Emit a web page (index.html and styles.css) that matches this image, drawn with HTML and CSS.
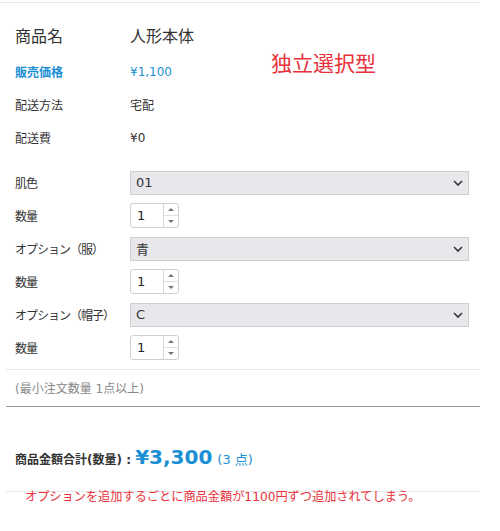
FILE: index.html
```html
<!DOCTYPE html>
<html lang="ja">
  <head>
    <meta charset="UTF-8" />
    <meta name="viewport" content="width=device-width, initial-scale=1.0" />
    <title>商品詳細</title>
    <link rel="stylesheet" href="styles.css">
  </head>
  <body>
    <div class="panel">
      <div class="info">
        <div class="row row-title">
          <span class="label">商品名</span>
          <span class="value">人形本体</span>
        </div>
        <div class="row row-price">
          <span class="label">販売価格</span>
          <span class="value">¥1,100</span>
        </div>
        <div class="row">
          <span class="label">配送方法</span>
          <span class="value">宅配</span>
        </div>
        <div class="row">
          <span class="label">配送費</span>
          <span class="value">¥0</span>
        </div>
      </div>

      <div class="options">
        <div class="row">
          <span class="label">肌色</span>
          <div class="select">
            <span>01</span>
            <svg class="chevron" width="10" height="6" viewBox="0 0 10 6"><path d="M1 1l4 4 4-4" fill="none" stroke="#333" stroke-width="1.6"/></svg>
          </div>
        </div>
        <div class="row">
          <span class="label">数量</span>
          <div class="qty">
            <span class="qty-value">1</span>
            <span class="spin"><i class="up"></i><i class="down"></i></span>
          </div>
        </div>
        <div class="row">
          <span class="label">オプション（服）</span>
          <div class="select">
            <span>青</span>
            <svg class="chevron" width="10" height="6" viewBox="0 0 10 6"><path d="M1 1l4 4 4-4" fill="none" stroke="#333" stroke-width="1.6"/></svg>
          </div>
        </div>
        <div class="row">
          <span class="label">数量</span>
          <div class="qty">
            <span class="qty-value">1</span>
            <span class="spin"><i class="up"></i><i class="down"></i></span>
          </div>
        </div>
        <div class="row">
          <span class="label">オプション（帽子）</span>
          <div class="select">
            <span>C</span>
            <svg class="chevron" width="10" height="6" viewBox="0 0 10 6"><path d="M1 1l4 4 4-4" fill="none" stroke="#333" stroke-width="1.6"/></svg>
          </div>
        </div>
        <div class="row">
          <span class="label">数量</span>
          <div class="qty">
            <span class="qty-value">1</span>
            <span class="spin"><i class="up"></i><i class="down"></i></span>
          </div>
        </div>
      </div>

      <p class="min-order">(最小注文数量 1点以上)</p>

      <div class="total">
        <span class="total-label">商品金額合計(数量) : </span>
        <span class="total-price">¥3,300</span>
        <span class="total-count">(3 点)</span>
      </div>

      <div class="note-type">独立選択型</div>
      <div class="note-bottom">オプションを追加するごとに商品金額が1100円ずつ追加されてしまう。</div>
    </div>
  </body>
</html>
```

FILE: styles.css
```css
body {
  margin: 0;
  padding: 0;
  background: #fff;
  font-family: "DejaVu Sans", "Noto Sans CJK JP", sans-serif;
  color: #333;
}

.panel {
  position: relative;
  width: 480px;
  margin-top: 2px;
  border-top: 1px solid #e6e6e6;
  height: 528px;
}

.info {
  padding-top: 12px;
}

.row {
  display: grid;
  grid-template-columns: 115px 339px;
  align-items: center;
  height: 33px;
  padding-left: 15px;
  font-size: 12px;
}

.row-title {
  height: 40px;
  font-size: 16px;
}

.row-price {
  color: #1a8fd4;
}

.row-price .label {
  font-weight: bold;
}

.options {
  margin-top: 12px;
  padding-bottom: 5px;
  margin-left: 6px;
  border-bottom: 1px solid #e6e6e6;
}

.options .row {
  padding-left: 9px;
}

.options .label {
  letter-spacing: -1px;
}

.select {
  position: relative;
  box-sizing: border-box;
  height: 24px;
  background: #e8e8ec;
  border: 1px solid #cfcfcf;
  padding-left: 5px;
  display: flex;
  align-items: center;
  font-size: 13px;
}

.chevron {
  position: absolute;
  right: 5px;
  top: 8px;
}

.qty {
  box-sizing: border-box;
  width: 49px;
  height: 25px;
  border: 1px solid #d0d0d0;
  border-radius: 3px;
  display: flex;
  font-size: 13px;
}

.qty-value {
  width: 26px;
  padding-left: 6px;
  display: flex;
  align-items: center;
  color: #222;
}

.spin {
  flex: 1;
  border-left: 1px solid #d8d8d8;
  display: flex;
  flex-direction: column;
}

.spin i {
  flex: 1;
  display: flex;
  align-items: center;
  justify-content: center;
}

.spin i::before {
  content: "";
  border-left: 3px solid transparent;
  border-right: 3px solid transparent;
}

.spin .up {
  border-bottom: 1px solid #e0e0e0;
}

.spin .up::before {
  border-bottom: 3px solid #777;
}

.spin .down::before {
  border-top: 3px solid #777;
}

.min-order {
  margin: 0 0 0 6px;
  padding: 9px 0 0 9px;
  height: 27px;
  font-size: 12px;
  color: #888;
  border-bottom: 1px solid #999;
}

.total {
  margin-left: 6px;
  padding: 38px 0 0 9px;
  height: 46px;
  border-bottom: 1px solid #e6e6e6;
  display: flex;
  align-items: baseline;
  white-space: pre;
}

.total-label {
  font-size: 12px;
  font-weight: bold;
  color: #333;
}

.total-price {
  font-size: 20px;
  font-weight: bold;
  color: #1a8fd4;
  margin-right: 5px;
}

.total-count {
  font-size: 13px;
  color: #1a8fd4;
}

.note-type {
  position: absolute;
  left: 271px;
  top: 44px;
  font-size: 21px;
  color: #e8313a;
}

.note-bottom {
  position: absolute;
  left: 25px;
  top: 484px;
  font-size: 12.2px;
  color: #e8313a;
}
```
